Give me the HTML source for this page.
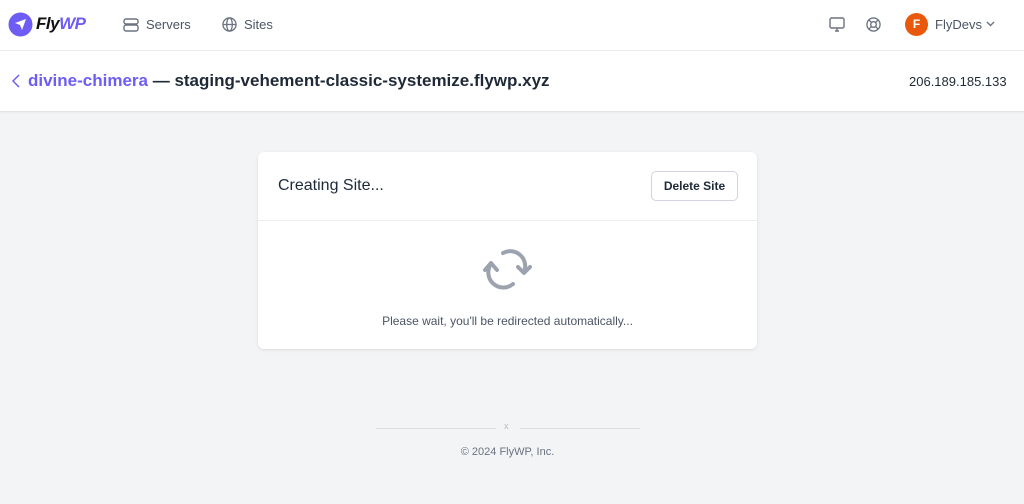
<!DOCTYPE html>
<html><head><meta charset="utf-8"><style>
*{box-sizing:border-box;margin:0;padding:0}
body{width:1024px;height:504px;overflow:hidden;background:#f3f4f6;font-family:"Liberation Sans",sans-serif;position:relative}
.top{position:absolute;left:0;top:0;width:1024px;height:51px;background:#fff;border-bottom:1px solid #ececef}
.sub{position:absolute;left:0;top:51px;width:1024px;height:61px;background:#fff;border-bottom:1px solid #e2e3e6;box-shadow:0 1px 2px rgba(0,0,0,.04)}
.abs{position:absolute}
.card{position:absolute;left:258px;top:152px;width:499px;height:197px;background:#fff;border-radius:6px;box-shadow:0 1px 3px rgba(0,0,0,.1)}
</style></head><body>
<div class="top">
<svg class="abs" style="left:8px;top:12px" width="25" height="25" viewBox="0 0 25 25"><circle cx="12.5" cy="12.5" r="12" fill="#6d5df5"/><path d="M7 11 L18 7 L14 18 L12 13 Z" fill="#fff"/></svg>
<div class="abs" style="left:36px;top:14px;font-size:17px;font-weight:bold;font-style:italic;color:#111;letter-spacing:-0.5px">Fly<span style="color:#6d5df5">WP</span></div>
<svg class="abs" style="left:123px;top:18px" width="16" height="14" viewBox="0 0 16 14" fill="none" stroke="#6b7280" stroke-width="1.4"><rect x="1" y="1" width="14" height="5" rx="2"/><rect x="1" y="7" width="14" height="6" rx="2"/></svg>
<div class="abs" style="left:146px;top:17px;font-size:13px;color:#4b5563">Servers</div>
<svg class="abs" style="left:222px;top:17px" width="15" height="15" viewBox="0 0 16 16" fill="none" stroke="#6b7280" stroke-width="1.4"><circle cx="8" cy="8" r="7"/><ellipse cx="8" cy="8" rx="3" ry="7"/><path d="M1 8h14"/></svg>
<div class="abs" style="left:244px;top:17px;font-size:13px;color:#4b5563">Sites</div>
<svg class="abs" style="left:829px;top:17px" width="16" height="15" viewBox="0 0 16 15" fill="none" stroke="#6b7280" stroke-width="1.4"><rect x="1" y="1" width="14" height="10" rx="1.5"/><path d="M6 14h4M8 11v3"/></svg>
<svg class="abs" style="left:866px;top:17px" width="15" height="15" viewBox="0 0 16 16" fill="none" stroke="#6b7280" stroke-width="1.4"><circle cx="8" cy="8" r="7"/><circle cx="8" cy="8" r="3"/><path d="M3 3l3 3M13 3l-3 3M3 13l3-3M13 13l-3-3"/></svg>
<div class="abs" style="left:905px;top:13px;width:23px;height:23px;border-radius:50%;background:#ea580c;color:#fff;font-size:12px;font-weight:bold;text-align:center;line-height:23px">F</div>
<div class="abs" style="left:935px;top:17px;font-size:13px;color:#4b5563">FlyDevs</div>
<svg class="abs" style="left:986px;top:21px" width="9" height="6" viewBox="0 0 9 6" fill="none" stroke="#6b7280" stroke-width="1.4"><path d="M1 1l3.5 3.5L8 1"/></svg>
</div>
<div class="sub">
<svg class="abs" style="left:12px;top:23px" width="8" height="14" viewBox="0 0 8 14" fill="none" stroke="#6d5df5" stroke-width="1.5"><path d="M7 1L1 7l6 6"/></svg>
<div class="abs" style="left:28px;top:20px;font-size:17px;font-weight:bold;color:#1f2937;white-space:nowrap"><span style="color:#6d5df5">divine-chimera</span> — staging-vehement-classic-systemize.flywp.xyz</div>
<div class="abs" style="left:909px;top:23px;font-size:13px;color:#1f2937">206.189.185.133</div>
</div>
<div class="card">
<div class="abs" style="left:20px;top:25px;font-size:16px;color:#1f2937">Creating Site...</div>
<div class="abs" style="left:393px;top:19px;width:87px;height:30px;border:1px solid #d1d5db;border-radius:5px;font-size:12px;font-weight:bold;color:#1f2937;text-align:center;line-height:28px">Delete Site</div>
<div class="abs" style="left:0;top:68px;width:499px;height:1px;background:#eceef1"></div>
<svg class="abs" style="left:224px;top:96px" width="52" height="42" viewBox="0 0 52 42" fill="none" stroke="#9ca3af" stroke-width="4" stroke-linecap="round" stroke-linejoin="round"><path d="M9 16 A15 15 0 0 0 31 36"/><path d="M3 22 L9 15 L15 22"/><path d="M21 5 A15 15 0 0 1 42 24"/><path d="M36 19 L42 25 L48 19"/></svg>
<div class="abs" style="left:0;top:162px;width:499px;text-align:center;font-size:12px;color:#4b5563">Please wait, you'll be redirected automatically...</div>
</div>
<div class="abs" style="left:376px;top:428px;width:120px;height:1px;background:#dcdee2"></div>
<div class="abs" style="left:520px;top:428px;width:120px;height:1px;background:#dcdee2"></div>
<div class="abs" style="left:504px;top:421px;font-size:9px;color:#b6b9bf">x</div>
<div class="abs" style="left:0;top:446px;width:1015px;text-align:center;font-size:11px;color:#6b7280">© 2024 FlyWP, Inc.</div>
</body></html>
